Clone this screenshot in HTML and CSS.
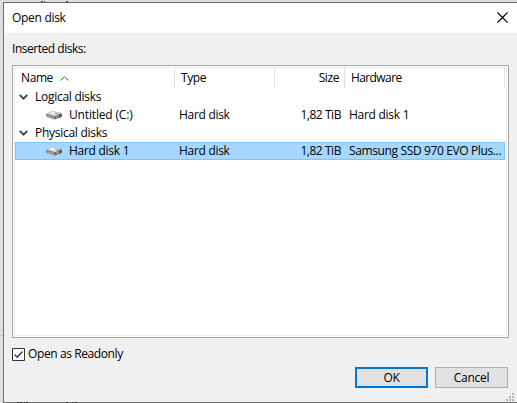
FILE: index.html
```html
<!DOCTYPE html>
<html lang="en">
<head>
<meta charset="utf-8">
<title>Open disk</title>
<link rel="stylesheet" href="styles.css">
</head>
<body>
<svg width="0" height="0" class="defs">
  <symbol id="drive" viewBox="0 0 16 10">
    <path d="M0 4 6 1l9 2 1 1v3L8 9.5 1 7 0 5z" fill="#77797c"/>
    <path d="M0 4 6 .8l9 2.1L9 6.2z" fill="#d4d5d6"/>
    <path d="m3 3.8 4-2 4.5 1-4 2z" fill="#efefef"/>
    <path d="m2 4.5 5 1.3M9 3l3 .7" stroke="#929497" fill="none"/>
    <path d="m1 5.3 7.3 2V9L2 7z" fill="#a7a9ac"/>
    <path d="M9 7.2 15.5 4v2.5L9 9z" fill="#4e5054"/>
    <path d="m10 7.5 3-1.4" stroke="#c9cacc"/>
  </symbol>
  <symbol id="chevron" viewBox="0 0 9 6"><path d="m.7.9 3.8 3.8L8.3.9" fill="none" stroke="#404040" stroke-width="1.8"/></symbol>
</svg>
<svg class="behind" width="517" height="403" viewBox="0 0 517 403">
  <path d="M0 335.500h3" stroke="#c4c4c4"/>
  <path d="M41 1.500h2m1 0h1m21 0h2" stroke="#444"/>
</svg>
<div class="dialog">
  <header class="titlebar"><span class="t-title">Open disk</span>
    <svg class="close" width="11" height="11" viewBox="0 0 11 11"><path d="m.5.5 10 10M10.500.5l-10 10" stroke="#000" stroke-width="1.1"/></svg>
  </header>
  <main class="content">
    <div class="label"><span class="t-label">Inserted disks:</span></div>
    <div class="list">
      <div class="columns head">
        <div class="cell"><span class="t-name">Name</span><svg class="sort" width="9" height="5" viewBox="0 0 9 5"><path d="M.5 4.500 4.500.7l4 3.800" fill="none" stroke="#555"/></svg></div>
        <div class="cell"><span class="t-type">Type</span></div>
        <div class="cell size"><span class="t-size">Size</span></div>
        <div class="cell"><span class="t-hw">Hardware</span></div>
      </div>
      <div class="group"><svg class="chev" width="9" height="6"><use href="#chevron"/></svg><span class="t-logical">Logical disks</span></div>
      <div class="columns row">
        <div class="disk"><svg width="16" height="10"><use href="#drive"/></svg><span class="t-untitled">Untitled (C:)</span></div>
        <div class="val"><span class="t-hd">Hard disk</span></div>
        <div class="val num"><span class="t-tib">1,82 TiB</span></div>
        <div class="val"><span class="t-hd1">Hard disk 1</span></div>
      </div>
      <div class="group"><svg class="chev" width="9" height="6"><use href="#chevron"/></svg><span class="t-physical">Physical disks</span></div>
      <div class="columns row selected">
        <div class="disk"><svg width="16" height="10"><use href="#drive"/></svg><span class="t-hd1">Hard disk 1</span></div>
        <div class="val"><span class="t-hd">Hard disk</span></div>
        <div class="val num"><span class="t-tib">1,82 TiB</span></div>
        <div class="val"><span class="t-sam">Samsung SSD 970 EVO Plus...</span></div>
      </div>
    </div>
    <div class="check"><svg width="13" height="13" viewBox="0 0 13 13"><path d="M.5.500h12v12H.5z" fill="#fff" stroke="#333"/><path d="m2.500 6.500 2.700 2.700L10.500 3.500" fill="none" stroke="#333" stroke-width="1.300"/></svg><span class="t-read">Open as Readonly</span></div>
    <div class="buttons"><div class="button primary"><span class="t-ok">OK</span></div><div class="button"><span class="t-cancel">Cancel</span></div></div>
  </main>
  <svg class="grip" width="8" height="8" viewBox="0 0 8 8"><path d="M6 0h2v2H6zM3 3h2v2H3zM6 3h2v2H6zM0 6h2v2H0zM3 6h2v2H3zM6 6h2v2H6z" fill="#b8b8b8"/></svg>
  <svg class="marks" width="64" height="1" viewBox="0 0 64 1"><path d="M0 .5h2m1 0h2m2 0h1m1 0h2m38 0h2m4 0h1m2 0h2" stroke="#222"/></svg>
</div>
</body>
</html>
```
FILE: styles.css
```css
* { box-sizing: border-box; }
body { margin: 0; width: 517px; height: 403px; overflow: hidden; padding: 2px 0 0 3px; background: #dedede; color: #000; font: 12px/18px "Open Sans", "Noto Sans", sans-serif; white-space: nowrap; }
svg { display: block; flex: none; }
.defs { position: absolute; }
.behind { position: absolute; left: 0; top: 0; }
.dialog { position: relative; width: 514px; height: 401px; border: 1px solid #6d6d6d; border-right: 0; background: #f0f0f0; }
.titlebar { height: 30px; padding: 0 9px 0 8px; background: #fff; display: flex; align-items: center; justify-content: space-between; }
.close { margin-top: -2px; }
.content { padding: 7px 8px 0; }
.label { height: 25px; }
.list { width: 497px; height: 273px; border: 1px solid #a6a6ab; padding: 1px; background: #fff; box-shadow: inset 0 0 0 1px #fff, inset 0 0 0 2px #ececec; }
.columns { display: grid; grid-template-columns: 160px 100px 70px 160px; margin-left: 1px; width: 490px; }
.head { height: 21px; }
.cell { display: flex; align-items: center; padding-left: 6px; border-right: 1px solid #e2e2e2; margin-top: 1px; }
.size { justify-content: flex-end; padding-right: 5px; }
.sort { margin-left: 7px; }
.group { height: 18px; padding-left: 5px; display: flex; align-items: center; }
.chev { margin-right: 7px; }
.row { height: 18px; line-height: 18px; }
.disk { display: flex; align-items: center; padding-left: 31px; }
.disk svg { margin-right: 7px; }
.val { padding-left: 4px; }
.num { text-align: right; padding-right: 4px; }
.selected { background: #a6d8ff; box-shadow: inset 0 0 0 1px #84c3f5; }
.check { height: 18px; margin-top: 7px; display: flex; align-items: center; gap: 3px; }
.buttons { display: flex; gap: 7px; justify-content: flex-end; margin: 4px 1px 0 0; }
.button { width: 73px; height: 21px; border: 1px solid #adadad; background: #e1e1e1; text-align: center; line-height: 19px; }
.primary { border: 2px solid #0078d7; line-height: 17px; }
.grip { position: absolute; right: 3px; bottom: 1px; }
.marks { position: absolute; left: 44px; bottom: -1px; }
.marks { left: 13px; }

.t-title, .t-hd { letter-spacing: -.3px; }
.t-label { letter-spacing: -.47px; }
.t-name, .t-size { letter-spacing: -.4px; }
.t-type { letter-spacing: -.4px; }
.t-hw { letter-spacing: -.6px; }
.t-logical, .t-physical, .t-hd1 { letter-spacing: -.27px; }
.t-untitled { letter-spacing: -.16px; }
.t-tib { letter-spacing: -.45px; }
.t-sam { letter-spacing: -.37px; }
.t-read { letter-spacing: -.4px; }
.t-ok, .t-cancel { letter-spacing: -.3px; }
```
